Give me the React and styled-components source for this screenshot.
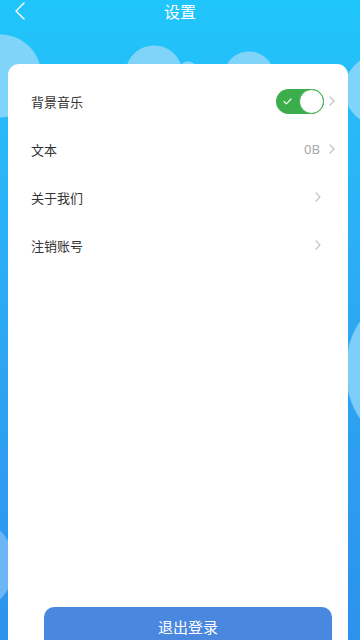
import React from 'react';
import styled, { createGlobalStyle } from 'styled-components';

const GlobalStyle = createGlobalStyle`
    html, body {
        margin: 0;
        padding: 0;
    }
    body {
        font-family: "Noto Sans CJK SC", "Noto Sans", sans-serif;
    }
`;

const settings = [
    { id: 1, title: '背景音乐', toggle: true, wide: true },
    { id: 2, title: '文本', value: '0B', wide: true },
    { id: 3, title: '关于我们' },
    { id: 4, title: '注销账号' },
];

const Chevron = ({ color = '#c4c4c4', size = 10, stroke = 1.2 }) => (
    <svg width={size * 0.6} height={size} viewBox="0 0 6 10" fill="none">
        <path d="M1 1l4 4-4 4" stroke={color} strokeWidth={stroke} strokeLinecap="round" strokeLinejoin="round" />
    </svg>
);

const Switch = ({ on }) => (
    <SwitchTrack on={on}>
        <svg width="9" height="7" viewBox="0 0 9 7" fill="none">
            <path d="M1 3.5l2.4 2.3L8 1" stroke="#fff" strokeWidth="1.1" strokeLinecap="round" strokeLinejoin="round" />
        </svg>
        <SwitchKnob />
    </SwitchTrack>
);

const App = () => {
    return (
        <Page>
            <GlobalStyle />
            <Header>
                <BackButton>
                    <svg width="12" height="18" viewBox="0 0 12 18" fill="none">
                        <path d="M10 1L2 9l8 8" stroke="#fff" strokeWidth="1.4" strokeLinecap="round" strokeLinejoin="round" />
                    </svg>
                </BackButton>
                <Title>设置</Title>
            </Header>
            <Card>
                <List>
                    {settings.map(item => (
                        <Row key={item.id} wide={item.wide}>
                            <Label>{item.title}</Label>
                            <Right>
                                {item.toggle && <Switch on />}
                                {item.value && <Value>{item.value}</Value>}
                                <Chevron />
                            </Right>
                        </Row>
                    ))}
                </List>
                <LogoutButton>退出登录</LogoutButton>
            </Card>
        </Page>
    );
};

const Page = styled.div`
    width: 360px;
    height: 640px;
    overflow: hidden;
    box-sizing: border-box;
    padding: 0 12px 0 8px;
    background:
        radial-gradient(circle at 0px 76px, #80d3f9 41px, transparent 42px),
        radial-gradient(circle at 154px 74px, #80d3f9 28px, transparent 29px),
        radial-gradient(circle at 188px 71px, #80d3f9 9px, transparent 10px),
        radial-gradient(circle at 249px 77px, #80d3f9 25px, transparent 26px),
        radial-gradient(circle at 380px 90px, #80d3f9 35px, transparent 36px),
        radial-gradient(ellipse 50px 70px at 395px 370px, #7ccdf8 97%, transparent 100%),
        radial-gradient(ellipse 40px 45px at -25px 565px, #6cb6f5 97%, transparent 100%),
        linear-gradient(180deg, #1fc6fb 0%, #29b6f7 25%, #2ea3f2 60%, #2b92ee 100%);
`;

const Header = styled.header`
    position: relative;
    height: 22px;
    display: flex;
    align-items: center;
    justify-content: center;
`;

const BackButton = styled.div`
    position: absolute;
    left: 6px;
    top: 2px;
    display: flex;
`;

const Title = styled.h1`
    margin: 0;
    color: #ffffff;
    font-size: 16px;
    font-weight: 400;
    line-height: 20px;
    margin-left: 4px;
`;

const Card = styled.div`
    margin-top: 42px;
    height: 585px;
    background: #ffffff;
    border-radius: 11px;
    display: flex;
    flex-direction: column;
    padding-top: 13px;
    box-sizing: border-box;
`;

const List = styled.div`
    display: flex;
    flex-direction: column;
`;

const Row = styled.div`
    height: 48px;
    display: flex;
    align-items: center;
    justify-content: space-between;
    padding-left: 23px;
    padding-right: ${props => (props.wide ? '13px' : '27px')};
`;

const Label = styled.span`
    font-size: 13px;
    color: #333333;
`;

const Right = styled.div`
    display: flex;
    align-items: center;
    gap: 5px;
`;

const Value = styled.span`
    font-family: "Noto Sans", sans-serif;
    font-size: 13px;
    color: #a8a8a8;
    margin-right: 4px;
`;

const SwitchTrack = styled.div`
    width: 48px;
    height: 25px;
    box-sizing: border-box;
    border-radius: 13px;
    background: ${props => (props.on ? '#3bae4b' : '#e5e5e5')};
    display: flex;
    align-items: center;
    justify-content: space-between;
    padding-left: 7px;
`;

const SwitchKnob = styled.div`
    width: 25px;
    height: 25px;
    box-sizing: border-box;
    border-radius: 50%;
    background: #ffffff;
    border: 1.5px solid #3bae4b;
`;

const LogoutButton = styled.button`
    margin: auto 16px 0 36px;
    height: 42px;
    border: none;
    border-radius: 10px;
    background: #4a87df;
    color: #ffffff;
    font-family: "Noto Sans CJK SC", sans-serif;
    font-size: 15px;
    padding: 0 0 4px;
    flex-shrink: 0;
`;

export default App;
